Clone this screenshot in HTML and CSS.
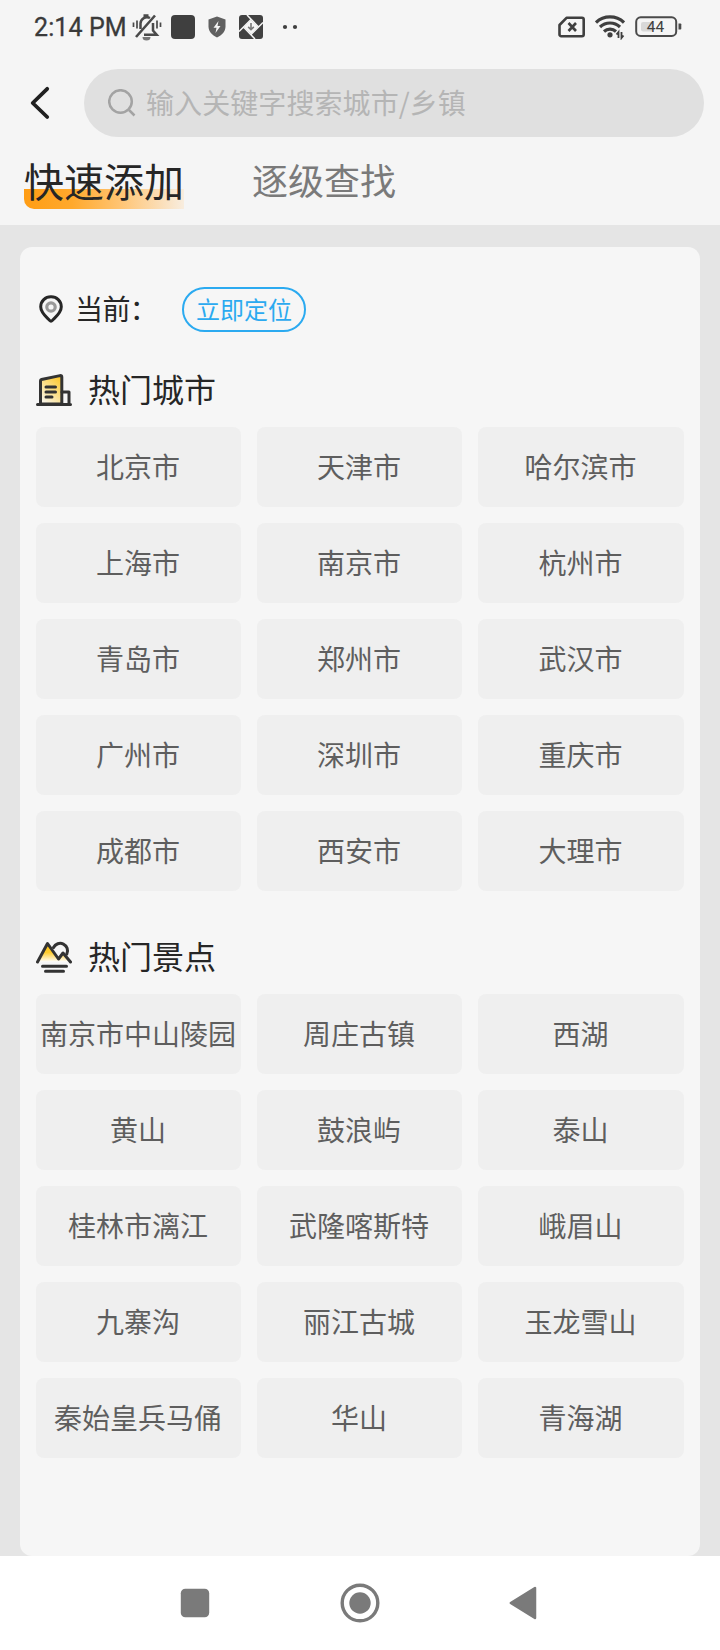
FILE: index.html
```html
<!DOCTYPE html>
<html lang="zh-CN">
<head>
<meta charset="utf-8">
<title>快速添加</title>
<link rel="stylesheet" href="styles.css">
</head>
<body>
<div class="screen">
  <header class="header">
    <div class="status">
      <span class="time">2:14 PM</span>
      <svg class="i-bell" width="30" height="28" viewBox="0 0 30 28" fill="none" stroke="#4a4a4a" stroke-width="2.500">
        <path d="M8.500 16v-5.500a6.500 6.500 0 0 1 9.500-5.500M21 10v7.500l3.700 4.300H12"/>
        <path d="M11.500 2.600h5M4 24 23 2.500" stroke-width="2.600"/>
        <path d="M1.500 9.500v4.500M5 7.500v8M25 7.500v8M28.500 9.500v4.500" stroke-width="1.700"/>
        <path d="M10.500 24h8a4 3.500 0 0 1-8 0z" fill="#777" stroke="none"/>
      </svg>
      <span class="i-square"></span>
      <svg class="i-shield" width="18" height="22" viewBox="0 0 18 22"><path d="M9 .5 17.500 3.500v7c0 5-3.500 8.500-8.500 11-5-2.500-8.500-6-8.500-11v-7z" fill="#606060"/><path d="M10.500 5 5.500 11.800h3L7.500 17l5-7H9.500z" fill="#f5f5f5"/></svg>
      <svg class="i-app" width="24" height="24" viewBox="0 0 24 24"><rect width="24" height="24" rx="3" fill="#414141"/><path d="m12 5 7 7-7 7-7-7z" fill="#f5f5f5"/><path d="M8 0 19.500 12M24 7.500 12 19.500M16 24 4.500 12M0 16.500 12 4.500" stroke="#f5f5f5" stroke-width="1.500"/><path d="M12 8v6.500m-2.800-2.600L12 14.700l2.800-2.800" fill="none" stroke="#777" stroke-width="1.600"/></svg>
      <svg class="i-dots" width="16" height="6" viewBox="0 0 16 6" fill="#3f3f3f"><circle cx="3" cy="3" r="2.100"/><circle cx="13" cy="3" r="2.100"/></svg>
      <svg class="i-sim" width="28" height="22" viewBox="0 0 28 22" fill="none" stroke="#3f3f3f" stroke-width="2.600"><path d="M8.500 1.800H24a1.700 1.700 0 0 1 1.700 1.700v15a1.700 1.700 0 0 1-1.700 1.700H3.200a1.700 1.700 0 0 1-1.700-1.700V9z" stroke-linejoin="round"/><path d="m10.500 7 7.500 8m0-8-7.500 8"/></svg>
      <svg class="i-wifi" width="30" height="26" viewBox="0 0 30 26" fill="none" stroke="#3f3f3f" stroke-width="3.200"><path d="M1 8.500a20.500 20.500 0 0 1 28 0M5 13a14.500 14.500 0 0 1 20 0M9 17.500a9 9 0 0 1 12 0"/><circle cx="15" cy="20.800" r="2.600" fill="#3f3f3f" stroke="none"/><path d="M23.500 24v-6l-2 2.500M26.500 18v6l2-2.500" stroke-width="1.800"/></svg>
      <svg class="i-battery" width="48" height="22" viewBox="0 0 48 22"><rect x="1.200" y="1.300" width="40" height="18.600" rx="4.500" fill="none" stroke="#4a4a4a" stroke-width="2"/><rect x="6" y="6" width="12" height="9.500" rx="2" fill="#d8d8d8"/><path d="M43.500 7.500h2q.8 0 .8.800v4.500q0 .8-.8.800h-2z" fill="#4a4a4a"/><text class="battery-text" x="20.500" y="16" text-anchor="middle">44</text></svg>
    </div>
    <div class="search-row">
      <svg class="back" width="22" height="34" viewBox="0 0 22 34"><path d="M19.200 2.800 4.700 17l14.500 14" fill="none" stroke="#202020" stroke-width="3.800" stroke-linecap="round" stroke-linejoin="round"/></svg>
      <div class="search">
        <svg width="28" height="28" viewBox="0 0 28 28" fill="none" stroke="#a3a3a3" stroke-width="2.500"><circle cx="12.500" cy="12.500" r="11.300"/><path d="m21 21 5.500 5.500"/></svg>
        <span class="placeholder">输入关键字搜索城市/乡镇</span>
      </div>
    </div>
    <nav class="tabs">
      <span class="tab active">快速添加</span>
      <span class="tab">逐级查找</span>
    </nav>
  </header>

  <main class="content">
    <section class="card">
      <div class="current">
        <svg class="pin" width="24" height="28" viewBox="0 0 24 28" fill="none"><path d="M12 1.700A10.100 10.100 0 0 0 1.700 11.800C1.700 18 8 22.500 10.500 25.300q1.500 1.500 3 0C16 22.500 22.300 18 22.300 11.800A10.100 10.100 0 0 0 12 1.700z" stroke="#262626" stroke-width="3"/><circle cx="12" cy="12" r="4.200" stroke="#999" stroke-width="3.200"/></svg>
        <span class="current-label">当前：</span>
        <span class="locate">立即定位</span>
      </div>

      <h2 class="heading">
        <svg width="36" height="32" viewBox="0 0 36 32" fill="none" stroke="#333" stroke-width="3" stroke-linejoin="round" stroke-linecap="round">
          <defs><linearGradient id="build" x1="1" y1="0" x2=".3" y2="1"><stop offset="0" stop-color="#ffc51a"/><stop offset="1" stop-color="#f8f3e2"/></linearGradient></defs>
          <path d="M4.500 30V6.800q0-1 1-1.300L24 1.600q1.800-.4 1.800 1.300V30z" fill="url(#build)"/><path d="M26 18h7v12M1.500 30.400h33M10 13h9.500M10 18h9.500M10 23h6"/>
        </svg>
        <span class="heading-text">热门城市</span>
      </h2>
      <div class="grid">
        <span class="tile">北京市</span><span class="tile">天津市</span><span class="tile">哈尔滨市</span>
        <span class="tile">上海市</span><span class="tile">南京市</span><span class="tile">杭州市</span>
        <span class="tile">青岛市</span><span class="tile">郑州市</span><span class="tile">武汉市</span>
        <span class="tile">广州市</span><span class="tile">深圳市</span><span class="tile">重庆市</span>
        <span class="tile">成都市</span><span class="tile">西安市</span><span class="tile">大理市</span>
      </div>

      <h2 class="heading second">
        <svg width="36" height="32" viewBox="0 0 36 32" fill="none" stroke="#333" stroke-width="3" stroke-linejoin="round" stroke-linecap="round">
          <defs><linearGradient id="peak" x1="0" y1="0" x2="0" y2="1"><stop offset="0" stop-color="#ffc30d"/><stop offset=".5" stop-color="#ffcc30"/><stop offset="1" stop-color="#fffdf5"/></linearGradient></defs>
          <path d="M1.500 20.500 11.500 2.500 21.500 18.500 27.500 11 34.500 20.500z" fill="url(#peak)" stroke="none"/>
          <path d="M1.500 21 11.500 2.500 22.500 18 27 12 34.500 21"/><path d="M17.500 6.500a7.200 7.200 0 1 1 13.300 6.500"/><path d="M6.500 25.200h24M9.500 30.300h18"/>
        </svg>
        <span class="heading-text">热门景点</span>
      </h2>
      <div class="grid">
        <span class="tile">南京市中山陵园</span><span class="tile">周庄古镇</span><span class="tile">西湖</span>
        <span class="tile">黄山</span><span class="tile">鼓浪屿</span><span class="tile">泰山</span>
        <span class="tile">桂林市漓江</span><span class="tile">武隆喀斯特</span><span class="tile">峨眉山</span>
        <span class="tile">九寨沟</span><span class="tile">丽江古城</span><span class="tile">玉龙雪山</span>
        <span class="tile">秦始皇兵马俑</span><span class="tile">华山</span><span class="tile">青海湖</span>
      </div>
    </section>
  </main>

  <footer class="navbar">
    <svg width="40" height="40" viewBox="0 0 40 40"><rect x="5.800" y="5.800" width="28.400" height="28.400" rx="4.500" fill="#7a7a7a"/></svg>
    <svg width="40" height="40" viewBox="0 0 40 40"><circle cx="20" cy="20" r="17.800" fill="none" stroke="#7a7a7a" stroke-width="3.400"/><circle cx="20" cy="20" r="10.700" fill="#7a7a7a"/></svg>
    <svg width="40" height="40" viewBox="0 0 40 40"><path d="M5.800 20 30 5v30z" fill="#7a7a7a" stroke="#7a7a7a" stroke-width="2.500" stroke-linejoin="round"/></svg>
  </footer>
</div>
</body>
</html>
```
FILE: styles.css
```css
* { box-sizing: border-box; }
body {
  margin: 0;
  font-family: "Noto Sans CJK SC", sans-serif;
  font-weight: 400;
  background: #e5e5e5;
}
svg { display: block; flex: none; }
.screen {
  width: 720px;
  height: 1650px;
  display: flex;
  flex-direction: column;
}
.header {
  height: 225px;
  background: #f5f5f5;
}
.status {
  height: 54px;
  padding: 0 39px 0 34px;
  display: flex;
  align-items: center;
}
.time {
  width: 98px;
  font: 400 25px/30px Roboto, sans-serif;
  letter-spacing: 0.1px;
  color: #3a3a3a;
  -webkit-text-stroke: 0.3px #3a3a3a;
  white-space: nowrap;
  padding-top: 2px;
}
.i-square {
  width: 24px;
  height: 24px;
  margin-left: 9px;
  border-radius: 4px;
  background: #3f3f3f;
}
.i-shield { margin-left: 13px; }
.i-app { margin-left: 13px; }
.i-dots { margin-left: 19px; }
.i-sim { margin-left: auto; }
.i-wifi { margin-left: 9px; }
.i-battery { margin-left: 10px; margin-right: -2px; }
.battery-text { font: 400 15.500px Roboto, sans-serif; fill: #3f3f3f; }
.search-row {
  display: flex;
  align-items: center;
  padding: 15px 16px 0 28px;
}
.search {
  flex: 1;
  height: 68px;
  margin-left: 34px;
  padding-left: 24px;
  border-radius: 34px;
  background: #e0e0e0;
  display: flex;
  align-items: center;
}
.placeholder {
  margin-left: 10px;
  padding-bottom: 2px;
  font-size: 28px;
  line-height: 40px;
  letter-spacing: 0.08px;
  color: #b5b5b5;
}
.tabs {
  height: 88px;
  padding: 14px 24px;
  display: flex;
  align-items: flex-start;
}
.tab {
  font-size: 36px;
  line-height: 57px;
  color: #7a7a7a;
}
.active {
  width: 160px;
  height: 58px;
  margin-right: 68px;
  font-size: 40px;
  line-height: 59px;
  color: #262626;
  background: linear-gradient(90deg, #ff9d14, #ffa92d 30%, #ffc473 60%, #f8eddf) 0 38px / 160px 20px no-repeat;
  border-bottom-left-radius: 10px;
}
.content {
  height: 1331px;
  padding: 22px 20px 0;
}
.card {
  height: 1309px;
  padding: 40px 16px 0;
  border-radius: 12px;
  background: #f6f6f6;
}
.current {
  height: 45px;
  padding-left: 3px;
  display: flex;
  align-items: center;
}
.pin { margin-bottom: 2px; }
.current-label {
  width: 107px;
  margin-left: 12px;
  padding-bottom: 4px;
  font-size: 28px;
  line-height: 40px;
  letter-spacing: -0.6px;
  color: #262626;
}
.locate {
  width: 124px;
  height: 45px;
  border: 2px solid #2baaf0;
  border-radius: 23px;
  font-size: 24px;
  line-height: 39px;
  text-align: center;
  color: #2baaf0;
}
.heading {
  height: 48px;
  margin: 34px 0 13px;
  display: flex;
  align-items: center;
  gap: 16px;
  font-size: 32px;
  line-height: 48px;
  font-weight: 400;
  color: #262626;
}
.heading-text { padding-bottom: 4px; }
.second { margin-top: 42px; }
.grid {
  display: grid;
  grid-template-columns: 205px 205px 206px;
  grid-auto-rows: 80px;
  gap: 16px;
}
.tile {
  border-radius: 8px;
  background: #efefef;
  font-size: 28px;
  line-height: 78px;
  padding-right: 1px;
  text-align: center;
  white-space: nowrap;
  color: #5e5e5e;
}
.navbar {
  height: 94px;
  padding: 0 175px;
  background: #fff;
  display: flex;
  align-items: center;
  justify-content: space-between;
}
```
